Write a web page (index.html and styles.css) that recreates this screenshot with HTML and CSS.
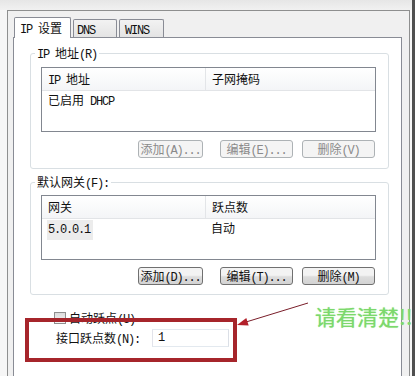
FILE: index.html
```html
<!DOCTYPE html>
<html lang="zh-CN">
<head>
  <meta charset="UTF-8">
  <title>IP 设置</title>
  <link rel="stylesheet" href="styles.css">
</head>
<body>
  <div class="dialog">
    <div class="tabs">
      <div class="tab active"><span class="en">IP </span>设置</div>
      <div class="tab"><span class="en">DNS</span></div>
      <div class="tab"><span class="en">WINS</span></div>
    </div>

    <div class="panel">
      <fieldset class="group">
        <legend><span class="en">IP </span>地址<span class="en">(R)</span></legend>
        <div class="list">
          <div class="list-head">
            <div class="col col-1"><span class="en">IP </span>地址</div>
            <div class="col">子网掩码</div>
          </div>
          <div class="list-row">
            <div class="col col-1">已启用<span class="en"> DHCP</span></div>
            <div class="col"></div>
          </div>
        </div>
        <div class="buttons">
          <button class="btn btn-add" disabled>添加<span class="en">(A)...</span></button>
          <button class="btn btn-edit" disabled>编辑<span class="en">(E)...</span></button>
          <button class="btn btn-del" disabled>删除<span class="en">(V)</span></button>
        </div>
      </fieldset>

      <fieldset class="group group-gw">
        <legend>默认网关<span class="en">(F):</span></legend>
        <div class="list">
          <div class="list-head">
            <div class="col col-1">网关</div>
            <div class="col">跃点数</div>
          </div>
          <div class="list-row">
            <div class="col col-1"><span class="selected en">5.0.0.1</span></div>
            <div class="col">自动</div>
          </div>
        </div>
        <div class="buttons">
          <button class="btn btn-add">添加<span class="en">(D)...</span></button>
          <button class="btn btn-edit">编辑<span class="en">(T)...</span></button>
          <button class="btn btn-del">删除<span class="en">(M)</span></button>
        </div>
      </fieldset>

      <label class="check-row">
        <span class="checkbox"></span>
        <span>自动跃点<span class="en">(U)</span></span>
      </label>

      <div class="metric-row">
        <span class="metric-label">接口跃点数<span class="en">(N):</span></span>
        <input class="metric-input" type="text" value="1">
      </div>
    </div>
  </div>

  <!-- annotation drawn over the screenshot -->
  <div class="mark-box"></div>
  <svg class="mark-arrow" width="415" height="376" viewBox="0 0 415 376">
    <line x1="308" y1="303" x2="246" y2="322" stroke="#7a1e2a" stroke-width="1"/>
    <polygon points="237,325 248.7,325.5 246.3,317.9" fill="#b3202a"/>
  </svg>
  <div class="mark-text">请看清楚!!</div>
</body>
</html>
```

FILE: styles.css
```css
body {
  margin: 0;
  width: 415px;
  height: 376px;
  overflow: hidden;
  position: relative;
  font-family: "Noto Sans CJK SC", sans-serif;
  font-size: 12px;
  line-height: 14px;
  color: #111;
  background:
    linear-gradient(to left, #4f4f4f 3px, transparent 3px),
    linear-gradient(to bottom, #e6e6e6, #f1f1f1 10px, #f6f6f6 10px);
}

/* SimSun-like half width latin */
.en {
  font-family: "Liberation Mono", monospace;
  letter-spacing: -1.2px;
  line-height: 10px;
  white-space: pre;
}

.dialog {
  margin: 10px 0 0 7px;
  width: 389px;
  height: 366px;
  padding: 6px 7px 0 5px;
  background: #f0f0f0;
  border: 1px solid #8e8f8f;
  border-bottom: none;
}

.tabs {
  display: flex;
  align-items: flex-end;
  height: 20px;
  padding-left: 1px;
}

.tab {
  height: 18px;
  padding: 0 0 0 3px;
  box-sizing: border-box;
  border: 1px solid #898c95;
  border-bottom: none;
  border-radius: 2px 2px 0 0;
  background: linear-gradient(#f2f2f2, #e4e4e4);
  line-height: 18px;
  margin-left: 2px;
  white-space: nowrap;
}

.tab:nth-child(2) {
  width: 44px;
}

.tab:nth-child(3) {
  width: 45px;
  padding-left: 5px;
}

.tab.active {
  position: relative;
  z-index: 1;
  width: 57px;
  height: 21px;
  margin: 0 0 -1px 0;
  padding-left: 5px;
  background: #fff;
  line-height: 20px;
}

.panel {
  height: 340px;
  padding: 8px 12px 0 16px;
  background: #fff;
  border: 1px solid #898c95;
  border-bottom: none;
}

.group {
  margin: 0;
  padding: 7px 12px 10px 10px;
  border: 1px solid #d9dfe3;
  border-radius: 3px;
}

.group legend {
  margin-left: -6px;
  padding: 0 2px;
  line-height: 14px;
}

.group-gw {
  margin-top: 6px;
  padding-top: 6px;
  padding-bottom: 9px;
}

.list {
  height: 65px;
  box-sizing: border-box;
  border: 1px solid #828790;
  background: #fff;
}

.list-head {
  display: flex;
  height: 22px;
  background: linear-gradient(#fff, #f4f5f7);
  border-bottom: 1px solid #e2e4e7;
}

.list-head .col {
  line-height: 22px;
}

.list-head .col-1 {
  border-right: 1px solid #e3e5e8;
}

.list-row {
  display: flex;
  height: 17px;
  line-height: 17px;
}

.col {
  padding-left: 6px;
  white-space: nowrap;
}

.col-1 {
  width: 157px;
}

.selected {
  margin-left: -1px;
  padding: 3px 3px 3px 1px;
  background: #ececec;
}

.buttons {
  display: flex;
  justify-content: flex-end;
  margin-top: 8px;
  padding-right: 1px;
}

.group-gw .buttons {
  margin-top: 7px;
}

.btn {
  height: 18px;
  padding: 0;
  font: inherit;
  line-height: 16px;
  white-space: nowrap;
  color: #111;
  border: 1px solid #707070;
  border-radius: 3px;
  background: linear-gradient(#f3f3f3 45%, #dddddd 55%, #d3d3d3);
}

.btn:disabled {
  color: #8a8a8a;
  border-color: #adb2b5;
  background: #f4f4f4;
}

.btn-add {
  width: 65px;
}

.btn-edit {
  width: 73px;
  margin-left: 17px;
}

.btn-del {
  width: 73px;
  margin-left: 9px;
}

.check-row {
  display: flex;
  align-items: center;
  gap: 3px;
  margin: 16px 0 0 24px;
  height: 14px;
  white-space: nowrap;
}

.checkbox {
  width: 12px;
  height: 12px;
  box-sizing: border-box;
  border: 1px solid #8f8f8f;
  background: linear-gradient(#dcdcdc, #f6f6f6);
}

.metric-row {
  display: flex;
  align-items: center;
  margin: 4px 0 0 26px;
}

.metric-label {
  width: 96px;
  white-space: nowrap;
}

.metric-input {
  width: 77px;
  height: 18px;
  box-sizing: border-box;
  padding: 0 5px;
  font-family: "Liberation Mono", monospace;
  font-size: 12px;
  color: #111;
  border: 1px solid #abadb3;
  border-top-color: #e3e9ef;
  border-left-color: #e2e3ea;
  border-right-color: #dbdfe6;
  border-bottom-color: #e3e9ef;
}

.mark-box {
  position: absolute;
  left: 25px;
  top: 318px;
  width: 212px;
  height: 44px;
  box-sizing: border-box;
  border: 4px solid #a6252b;
}

.mark-arrow {
  position: absolute;
  left: 0;
  top: 0;
}

.mark-text {
  position: absolute;
  left: 315px;
  top: 303px;
  font-family: "Noto Sans CJK SC", sans-serif;
  font-size: 21px;
  line-height: 26px;
  color: #7cd86c;
  text-shadow: 0 0 1px #9ae68c;
  white-space: nowrap;
}
```
